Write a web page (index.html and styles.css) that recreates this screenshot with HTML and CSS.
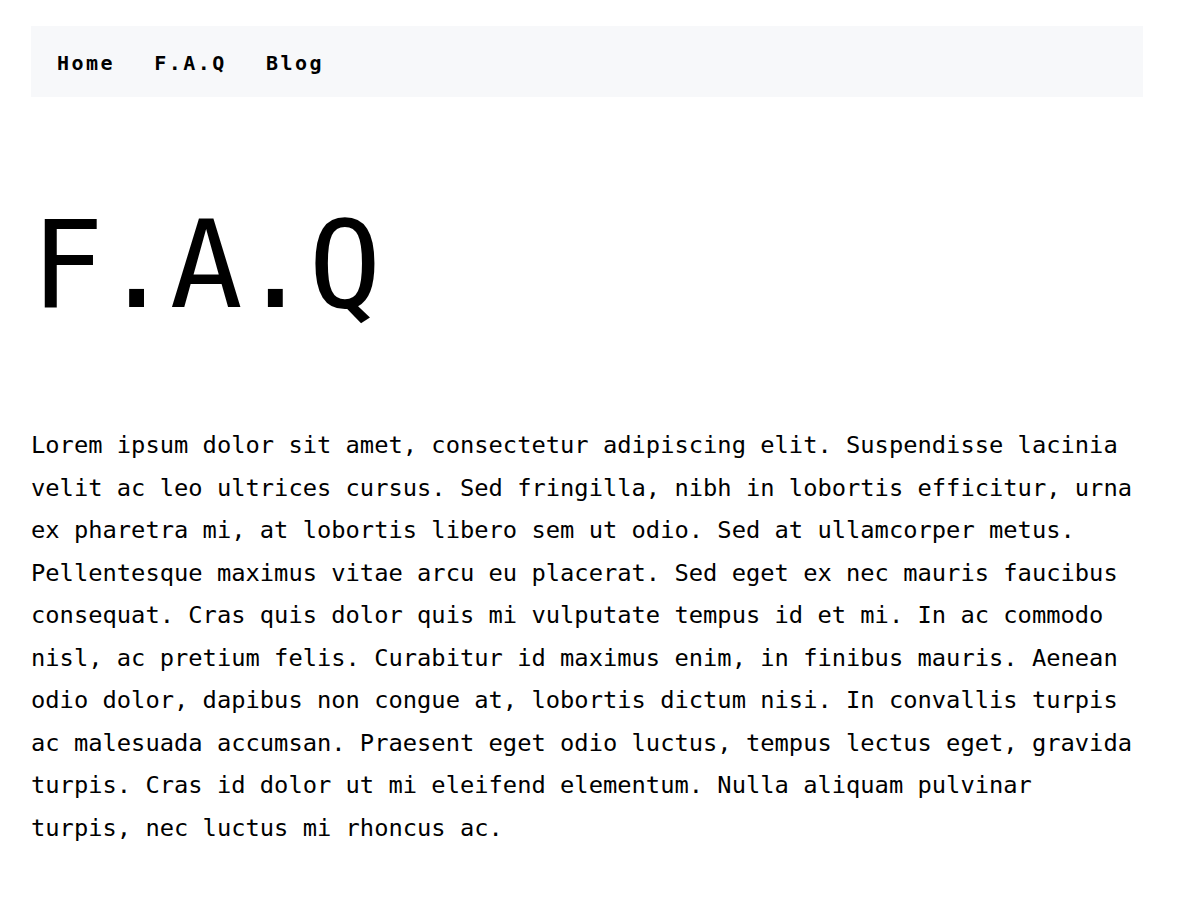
FILE: index.html
```html
<!DOCTYPE html>
<html lang="en">
<head>
<meta charset="utf-8">
<title>F.A.Q</title>
<link rel="stylesheet" href="styles.css">
</head>
<body>
<div class="container">
  <nav class="nav">
    <a class="nav-link" href="#">Home</a>
    <a class="nav-link" href="#">F.A.Q</a>
    <a class="nav-link" href="#">Blog</a>
  </nav>
  <h1 class="title">F.A.Q</h1>
  <p class="text">Lorem ipsum dolor sit amet, consectetur adipiscing elit. Suspendisse lacinia velit ac leo ultrices cursus. Sed fringilla, nibh in lobortis efficitur, urna ex pharetra mi, at lobortis libero sem ut odio. Sed at ullamcorper metus. Pellentesque maximus vitae arcu eu placerat. Sed eget ex nec mauris faucibus consequat. Cras quis dolor quis mi vulputate tempus id et mi. In ac commodo nisl, ac pretium felis. Curabitur id maximus enim, in finibus mauris. Aenean odio dolor, dapibus non congue at, lobortis dictum nisi. In convallis turpis ac malesuada accumsan. Praesent eget odio luctus, tempus lectus eget, gravida turpis. Cras id dolor ut mi eleifend elementum. Nulla aliquam pulvinar turpis, nec luctus mi rhoncus ac.</p>
</div>
</body>
</html>
```
FILE: styles.css
```css
html, body {
  margin: 0;
  padding: 0;
  background: #ffffff;
}
body {
  font-family: "DejaVu Sans Mono", "Liberation Mono", monospace;
  color: #000000;
}
.container {
  width: 1112px;
  margin-left: 31px;
  padding-top: 26px;
}
.nav {
  display: flex;
  align-items: center;
  height: 71px;
  padding-left: 26px;
  gap: 39px;
  background: #f7f8fa;
}
.nav-link {
  font-size: 20px;
  font-weight: bold;
  letter-spacing: 2.5px;
  color: #000000;
  text-decoration: none;
  padding-top: 2px;
}
.title {
  margin: 108px 0 0 0;
  font-size: 121px;
  line-height: 1;
  font-weight: normal;
  letter-spacing: -3.5px;
}
.text {
  margin: 98px 0 0 0;
  font-size: 23.75px;
  line-height: 42.5px;
}
```
